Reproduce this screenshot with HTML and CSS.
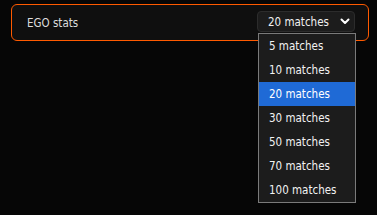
FILE: index.html
```html
<!DOCTYPE html>
<html>
<head>
<meta charset="utf-8">
<link rel="stylesheet" href="styles.css">
</head>
<body>
<div class="card">
  <span class="title">EGO stats</span>
  <div class="picker">
    <div class="select">
      <span>20 matches</span>
      <svg class="chev" width="10" height="7" viewBox="0 0 10 7"><path d="M1.5 1.5 L5 5 L8.5 1.5" fill="none" stroke="#fff" stroke-width="2" stroke-linecap="round" stroke-linejoin="round"/></svg>
    </div>
    <ul class="menu">
      <li>5 matches</li>
      <li>10 matches</li>
      <li class="active">20 matches</li>
      <li>30 matches</li>
      <li>50 matches</li>
      <li>70 matches</li>
      <li>100 matches</li>
    </ul>
  </div>
</div>
</body>
</html>
```
FILE: styles.css
```css
html, body {
  margin: 0;
  padding: 0;
  background: #060606;
}
body {
  box-sizing: border-box;
  min-height: 215px;
  font-family: "DejaVu Sans", sans-serif;
  font-stretch: condensed;
  font-size: 11.5px;
  color: #e6e6e6;
  padding: 4px 8px 0 11px;
}
.card {
  box-sizing: border-box;
  height: 37px;
  border: 1px solid #ff5a00;
  border-radius: 6px;
  background: #0f0f0f;
  display: flex;
  align-items: center;
  justify-content: space-between;
  padding: 0 13px 0 15px;
}
.title {
  color: #dcdcdc;
}
.picker {
  position: relative;
}
.select {
  box-sizing: border-box;
  width: 98px;
  height: 21px;
  background: #1c1c1c;
  border: 1px solid #2c2c2c;
  border-radius: 4px;
  display: flex;
  align-items: center;
  justify-content: space-between;
  padding: 0 4px 0 10px;
  color: #f0f0f0;
  margin-top: -2px;
}
.chev {
  display: block;
}
.menu {
  position: absolute;
  z-index: 5;
  left: 1px;
  top: 20px;
  width: 98px;
  box-sizing: border-box;
  margin: 0;
  padding: 0;
  list-style: none;
  background: #1c1c1c;
  border: 1px solid #7a7a7a;
}
.menu li {
  height: 24px;
  line-height: 24px;
  padding-left: 10px;
  color: #f2f2f2;
}
.menu li.active {
  background: #1f6ad6;
  color: #fff;
}
```
